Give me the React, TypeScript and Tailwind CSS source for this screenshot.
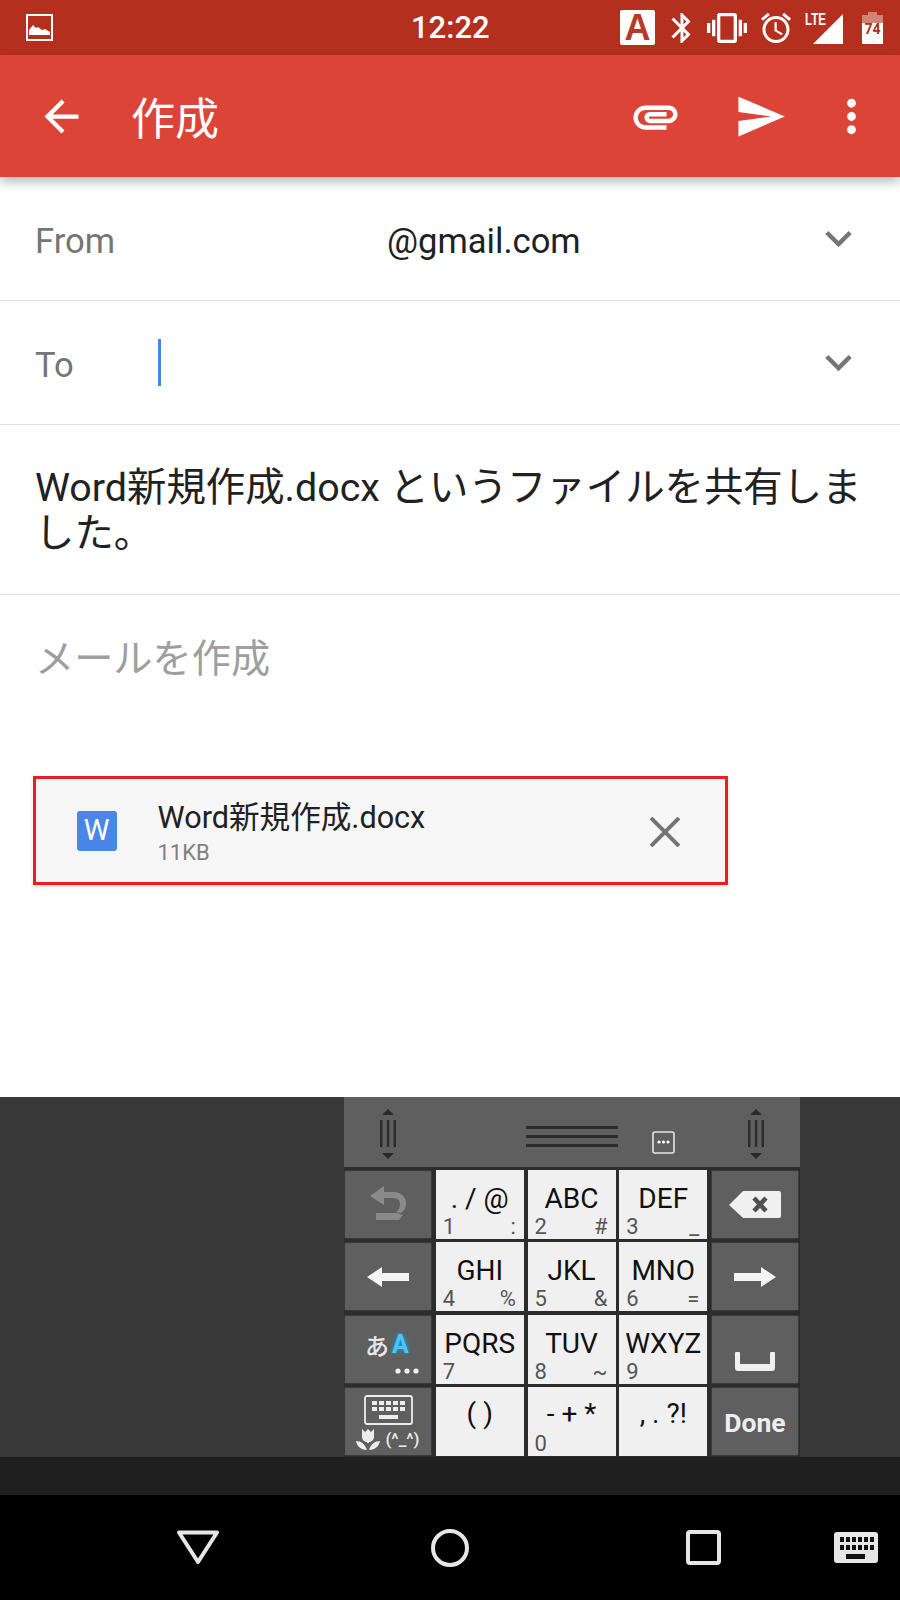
import React from "react";

const P = ({ d, size, className }: { d: string; size: number; className?: string }) => (
  <svg width={size} height={size} viewBox="0 0 24 24" fill="currentColor" className={`shrink-0 ${className ?? ""}`}>
    <path d={d} />
  </svg>
);

const ICONS = {
  back: "M20 11H7.83l5.59-5.59L12 4l-8 8 8 8 1.41-1.41L7.83 13H20v-2z",
  attach:
    "M2 12.5C2 9.46 4.46 7 7.5 7H18c2.21 0 4 1.79 4 4s-1.79 4-4 4H9.5C8.12 15 7 13.88 7 12.5S8.12 10 9.5 10H17v2H9.41c-.55 0-.55 1 0 1H18c1.1 0 2-.9 2-2s-.9-2-2-2H7.5C5.57 9 4 10.57 4 12.5S5.57 16 7.5 16H17v2H7.5C4.46 18 2 15.54 2 12.5z",
  send: "M2.01 21L23 12 2.01 3 2 10l15 2-15 2z",
  more: "M12 8c1.1 0 2-.9 2-2s-.9-2-2-2-2 .9-2 2 .9 2 2 2zm0 2c-1.1 0-2 .9-2 2s.9 2 2 2 2-.9 2-2-.9-2-2-2zm0 6c-1.1 0-2 .9-2 2s.9 2 2 2 2-.9 2-2-.9-2-2-2z",
  chevron: "M16.59 8.59L12 13.17 7.41 8.59 6 10l6 6 6-6z",
  alarm:
    "M22 5.72l-4.6-3.86-1.29 1.53 4.6 3.86L22 5.72zM7.88 3.39L6.6 1.86 2 5.71l1.29 1.53 4.59-3.85zM12.5 8H11v6l4.75 2.85.75-1.23-4-2.37V8zM12 4c-4.97 0-9 4.03-9 9s4.03 9 9 9 9-4.03 9-9-4.03-9-9-9zm0 16c-3.87 0-7-3.13-7-7s3.13-7 7-7 7 3.13 7 7-3.13 7-7 7z",
  vibrate:
    "M0 15h2V9H0v6zm3 2h2V7H3v10zm19-8v6h2V9h-2zm-3 8h2V7h-2v10zM16.5 3h-9C6.67 3 6 3.67 6 4.5v15c0 .83.67 1.5 1.5 1.5h9c.83 0 1.5-.67 1.5-1.5v-15c0-.83-.67-1.5-1.5-1.5zM16 19H8V5h8v14z",
  bluetooth:
    "M17.71 7.71L12 2h-1v7.59L6.41 5 5 6.41 10.59 12 5 17.59 6.41 19 11 14.41V22h1l5.71-5.71-4.3-4.29 4.3-4.29zM13 5.83l1.88 1.88L13 9.59V5.83zm1.88 10.46L13 18.17v-3.76l1.88 1.88z",
};

const Key = ({ label, num, sym, low }: { label: string; num?: string; sym?: string; low?: boolean }) => (
  <div className="flex h-[69px] flex-col bg-[#f0f0f0]">
    <div className={`h-[44px] whitespace-pre text-center text-[28px] leading-[34px] text-[#111111] ${low ? "pt-[10px]" : "pt-[12px]"}`}>{label}</div>
    <div className="flex h-[25px] items-end justify-between pl-[7px] pr-[8px] text-[22px] leading-[25px] text-[#555555]">
      <span>{num}</span>
      <span>{sym}</span>
    </div>
  </div>
);

const DarkKey = ({ children, className }: { children: React.ReactNode; className?: string }) => (
  <div className={`flex h-[69px] flex-col items-center justify-center rounded-[2px] border border-[#3a3a3a] bg-[#5f5f5f] ${className ?? ""}`}>
    {children}
  </div>
);

const Grip = ({ className }: { className?: string }) => (
  <svg width="18" height="52" viewBox="0 0 18 52" className={`shrink-0 ${className ?? ""}`} fill="#2b2b2b">
    <path d="M9 1l6 6H3z" />
    <rect x="1" y="12" width="2.5" height="27" />
    <rect x="7.8" y="12" width="2.5" height="27" />
    <rect x="14.5" y="12" width="2.5" height="27" />
    <path d="M3 45h12l-6 6z" />
  </svg>
);

export default function App() {
  return (
    <div className="flex h-[1600px] w-[900px] flex-col overflow-hidden bg-white font-['Roboto','Noto_Sans_CJK_JP',sans-serif]">
      {/* status bar */}
      <div className="flex h-[55px] shrink-0 items-center bg-[#b52f1f] text-white">
        <div className="flex w-[411px] shrink-0 pl-[26px]">
          <svg width="27" height="27" viewBox="0 0 27 27">
            <rect x="1" y="1" width="25" height="25" fill="none" stroke="#fff" strokeWidth="2" />
            <path d="M3 21v-5l4-5 3 3 2-1 4 3 3-1 5 3v3z" fill="#fff" />
          </svg>
        </div>
        <div className="w-[209px] shrink-0 text-[31px] font-medium leading-none">12:22</div>
        <div className="flex h-[35px] w-[35px] shrink-0 items-center justify-center rounded-[2px] bg-white font-['Liberation_Sans',sans-serif] text-[36px] font-bold leading-none text-[#b8392b]">
          A
        </div>
        <P d={ICONS.bluetooth} size={36} className="ml-[9px]" />
        <P d={ICONS.vibrate} size={40} className="ml-[7px]" />
        <P d={ICONS.alarm} size={36} className="ml-[11px]" />
        <div className="relative ml-[11px] h-[30px] w-[38px] shrink-0">
          <svg width="38" height="30" viewBox="0 0 38 30" className="mt-[1px]">
            <path d="M38 0v30H8z" fill="#fff" />
          </svg>
          <span className="absolute left-0 top-[-1px] origin-left scale-x-[0.72] font-['Liberation_Sans',sans-serif] text-[16px] font-bold leading-none">
            LTE
          </span>
        </div>
        <div className="ml-[19px] flex w-[21px] shrink-0 flex-col items-center">
          <div className="h-[3px] w-[9px] bg-[#d08478]" />
          <div className="h-[8px] w-[21px] bg-[#d08478]" />
          <div className="h-[21px] w-[21px] bg-white text-center text-[14px] font-bold leading-[12px] text-[#a8321f]">74</div>
        </div>
      </div>

      {/* app bar */}
      <div className="relative z-10 flex h-[122px] shrink-0 items-center bg-[#db4437] text-white shadow-[0_5px_10px_rgba(0,0,0,0.28)]">
        <P d={ICONS.back} size={51} className="ml-[36px]" />
        <div className="ml-[44px] font-['Noto_Sans_CJK_JP',sans-serif] text-[44px] font-normal leading-none">作成</div>
        <P d={ICONS.attach} size={53} className="ml-[410px]" />
        <P d={ICONS.send} size={53} className="ml-[52px]" />
        <P d={ICONS.more} size={53} className="ml-[38px]" />
      </div>

      {/* from */}
      <div className="flex h-[124px] shrink-0 items-center border-b border-[#e0e0e0] pl-[35px] pr-[35px]">
        <span className="w-[352px] shrink-0 pt-[7px] text-[34.6px] text-[#757575]">From</span>
        <span className="pt-[7px] text-[34.6px] text-[#212121]">@gmail.com</span>
        <P d={ICONS.chevron} size={53} className="ml-auto text-[#757575]" />
      </div>

      {/* to */}
      <div className="flex h-[124px] shrink-0 items-center border-b border-[#e0e0e0] pl-[35px] pr-[35px]">
        <span className="w-[123px] shrink-0 pt-[7px] text-[34.6px] text-[#757575]">To</span>
        <div className="h-[47px] w-[3px] bg-[#4285f4]" />
        <P d={ICONS.chevron} size={53} className="ml-auto text-[#757575]" />
      </div>

      {/* subject */}
      <div className="flex h-[170px] shrink-0 flex-col justify-center border-b border-[#e0e0e0] pl-[35px]">
        <div className="whitespace-nowrap pt-[2px] text-[39.4px] leading-[46px] text-[#212121]">
          Word新規作成.docx というファイルを共有しま
          <br />
          した。
        </div>
      </div>

      {/* body */}
      <div className="flex min-h-0 flex-1 flex-col pl-[33px]">
        <div className="mt-[39px] h-[50px] pl-[2px] text-[39.2px] leading-[50px] text-[#9e9e9e]">メールを作成</div>
        <div className="mt-[92px] flex h-[109px] w-[695px] items-center border-[3px] border-[#ed1c24] bg-[#f6f6f6] shadow-[0_2px_4px_rgba(0,0,0,0.12)]">
          <div className="ml-[40.5px] flex h-[40px] w-[40px] shrink-0 items-center justify-center rounded-[3px] bg-[#4a86e8] text-[29px] leading-none text-white">
            W
          </div>
          <div className="ml-[41px] mt-[2px] flex flex-col">
            <span className="text-[30.6px] leading-[40px] text-[#212121]">Word新規作成.docx</span>
            <span className="pt-[2px] text-[22px] leading-[26px] text-[#808080]">11KB</span>
          </div>
          <svg width="30" height="30" viewBox="0 0 30 30" className="ml-auto mr-[45px] mt-[2px] shrink-0" stroke="#757575" strokeWidth="4">
            <path d="M1 1l28 28M29 1L1 29" />
          </svg>
        </div>
      </div>

      {/* keyboard */}
      <div className="flex h-[360px] shrink-0 bg-[#383838]">
        <div className="ml-[344px] flex w-[456px] flex-col bg-[#2c2c2c]">
          <div className="flex h-[70px] shrink-0 items-center bg-[#5f5f5f]">
            <Grip className="ml-[35px] mt-[3px]" />
            <svg width="92" height="21" viewBox="0 0 92 21" className="ml-[129px] mt-[8px] shrink-0" fill="#2b2b2b">
              <rect y="0" width="92" height="3" />
              <rect y="9" width="92" height="3" />
              <rect y="18" width="92" height="3" />
            </svg>
            <svg width="23" height="23" viewBox="0 0 23 23" className="ml-[34px] mt-[21px] shrink-0">
              <rect x="1" y="1" width="21" height="21" rx="2" fill="none" stroke="#e6e6e6" strokeWidth="1.6" />
              <circle cx="7" cy="11" r="1.6" fill="#fff" />
              <circle cx="11.5" cy="11" r="1.6" fill="#fff" />
              <circle cx="16" cy="11" r="1.6" fill="#fff" />
            </svg>
            <Grip className="ml-[72px] mt-[3px]" />
          </div>
          <div className="mt-[2.5px] grid grid-cols-[repeat(5,88px)] gap-x-[3.75px] gap-y-[3.5px]">
            <DarkKey>
              <svg width="38" height="36" viewBox="0 0 38 36" fill="#8a8a8a">
                <path d="M1 10L15 0v6h10c7 0 12 5 12 11 0 5-2 8-5 10l-5-1c3-2 4-5 4-8 0-4-3-6-7-6H15v7z" />
                <path d="M7 27h21l6 2-4 5H7z" />
              </svg>
            </DarkKey>
            <Key label=". / @" num="1" sym=":" />
            <Key label="ABC" num="2" sym="#" />
            <Key label="DEF" num="3" sym="_" />
            <DarkKey>
              <svg width="52" height="27" viewBox="0 0 52 27">
                <path d="M0 14L13 1a3 3 0 0 1 2-1h35a2 2 0 0 1 2 2v23a2 2 0 0 1-2 2H15a3 3 0 0 1-2-1z" fill="#f0f0f0" />
                <path d="M25 7l12 13M37 7L25 20" stroke="#505050" strokeWidth="4.5" />
              </svg>
            </DarkKey>

            <DarkKey>
              <svg width="42" height="20" viewBox="0 0 42 20" fill="#f4f4f4">
                <path d="M0 10L15 0v6h27v8H15v6z" />
              </svg>
            </DarkKey>
            <Key label="GHI" num="4" sym="%" />
            <Key label="JKL" num="5" sym="&" />
            <Key label="MNO" num="6" sym="=" />
            <DarkKey>
              <svg width="42" height="20" viewBox="0 0 42 20" fill="#f4f4f4">
                <path d="M42 10L27 0v6H0v8h27v6z" />
              </svg>
            </DarkKey>

            <DarkKey className="!items-start !justify-start pt-[16px]">
              <div className="ml-[20px] flex h-[26px] items-center gap-[3px] leading-none">
                <span className="font-['Noto_Sans_CJK_JP',sans-serif] text-[24px] font-medium text-[#e8e8e8]">あ</span>
                <span className="text-[25px] font-bold text-[#43c8ff] [text-shadow:0_0_5px_#1e9fe0]">A</span>
              </div>
              <svg width="24" height="6" viewBox="0 0 24 6" fill="#f0f0f0" className="ml-[50px] mt-[10px]">
                <circle cx="3" cy="3" r="2.6" />
                <circle cx="12" cy="3" r="2.6" />
                <circle cx="21" cy="3" r="2.6" />
              </svg>
            </DarkKey>
            <Key label="PQRS" num="7" />
            <Key label="TUV" num="8" sym="~" />
            <Key label="WXYZ" num="9" />
            <DarkKey>
              <svg width="40" height="19" viewBox="0 0 40 19" fill="#f0f0f0" className="mt-[24px]">
                <path d="M0 1a1 1 0 0 1 1-1h3a1 1 0 0 1 1 1v11h30V1a1 1 0 0 1 1-1h3a1 1 0 0 1 1 1v15a3 3 0 0 1-3 3H3a3 3 0 0 1-3-3z" />
              </svg>
            </DarkKey>

            <DarkKey>
              <svg width="49" height="30" viewBox="0 0 49 30" className="mt-[1px]">
                <rect x="1" y="1" width="47" height="28" rx="2" fill="none" stroke="#ececec" strokeWidth="1.8" />
                <g fill="#ececec">
                  <rect x="8" y="6" width="5" height="4" />
                  <rect x="15" y="6" width="5" height="4" />
                  <rect x="22" y="6" width="5" height="4" />
                  <rect x="29" y="6" width="5" height="4" />
                  <rect x="36" y="6" width="5" height="4" />
                  <rect x="8" y="12" width="5" height="4" />
                  <rect x="15" y="12" width="5" height="4" />
                  <rect x="22" y="12" width="5" height="4" />
                  <rect x="29" y="12" width="5" height="4" />
                  <rect x="36" y="12" width="5" height="4" />
                  <rect x="15" y="20" width="19" height="4" />
                </g>
              </svg>
              <div className="mt-[4px] flex items-center gap-[5px] leading-none text-[#ececec]">
                <svg width="24" height="21" viewBox="0 0 24 21" fill="#ececec">
                  <path d="M6 0l3 3 3-3 3 3 3-3v8c0 3-3 5-5 5v1h-2v-1c-2 0-5-2-5-5z" />
                  <path d="M0 12c5 0 9 3 11 9-5 0-10-3-11-9zM24 12c-5 0-9 3-11 9 5 0 10-3 11-9z" />
                </svg>
                <span className="text-[17px] font-medium">(^_^)</span>
              </div>
            </DarkKey>
            <Key label="( )" low />
            <Key label="- + *" num="0" low />
            <Key label=", . ?!" low />
            <DarkKey>
              <span className="mt-[3px] text-[26.5px] font-bold leading-none text-[#eeeeee]">Done</span>
            </DarkKey>
          </div>
        </div>
      </div>
      <div className="h-[38px] shrink-0 bg-[#1f1f1f]" />

      {/* nav bar */}
      <div className="flex h-[105px] shrink-0 items-center bg-black">
        <svg width="44" height="35" viewBox="0 0 44 35" className="ml-[176px] shrink-0">
          <path d="M3 2.5h38L22 32z" fill="none" stroke="#e6e6e6" strokeWidth="4" strokeLinejoin="round" />
        </svg>
        <svg width="38" height="38" viewBox="0 0 38 38" className="ml-[211px] shrink-0">
          <circle cx="19" cy="19" r="17" fill="none" stroke="#e6e6e6" strokeWidth="4" />
        </svg>
        <svg width="35" height="35" viewBox="0 0 35 35" className="ml-[217px] shrink-0">
          <rect x="2" y="2" width="31" height="31" rx="2" fill="none" stroke="#e6e6e6" strokeWidth="4" />
        </svg>
        <svg width="44" height="31" viewBox="0 0 44 31" className="ml-[113px] shrink-0">
          <rect width="44" height="31" rx="3" fill="#e6e6e6" />
          <g fill="#111">
            <rect x="6" y="5" width="4" height="5" />
            <rect x="12" y="5" width="4" height="5" />
            <rect x="18" y="5" width="4" height="5" />
            <rect x="24" y="5" width="4" height="5" />
            <rect x="30" y="5" width="4" height="5" />
            <rect x="36" y="5" width="4" height="5" />
            <rect x="6" y="13" width="4" height="5" />
            <rect x="12" y="13" width="4" height="5" />
            <rect x="18" y="13" width="4" height="5" />
            <rect x="24" y="13" width="4" height="5" />
            <rect x="30" y="13" width="4" height="5" />
            <rect x="36" y="13" width="4" height="5" />
            <rect x="12" y="22" width="19" height="5" />
          </g>
        </svg>
      </div>
    </div>
  );
}
